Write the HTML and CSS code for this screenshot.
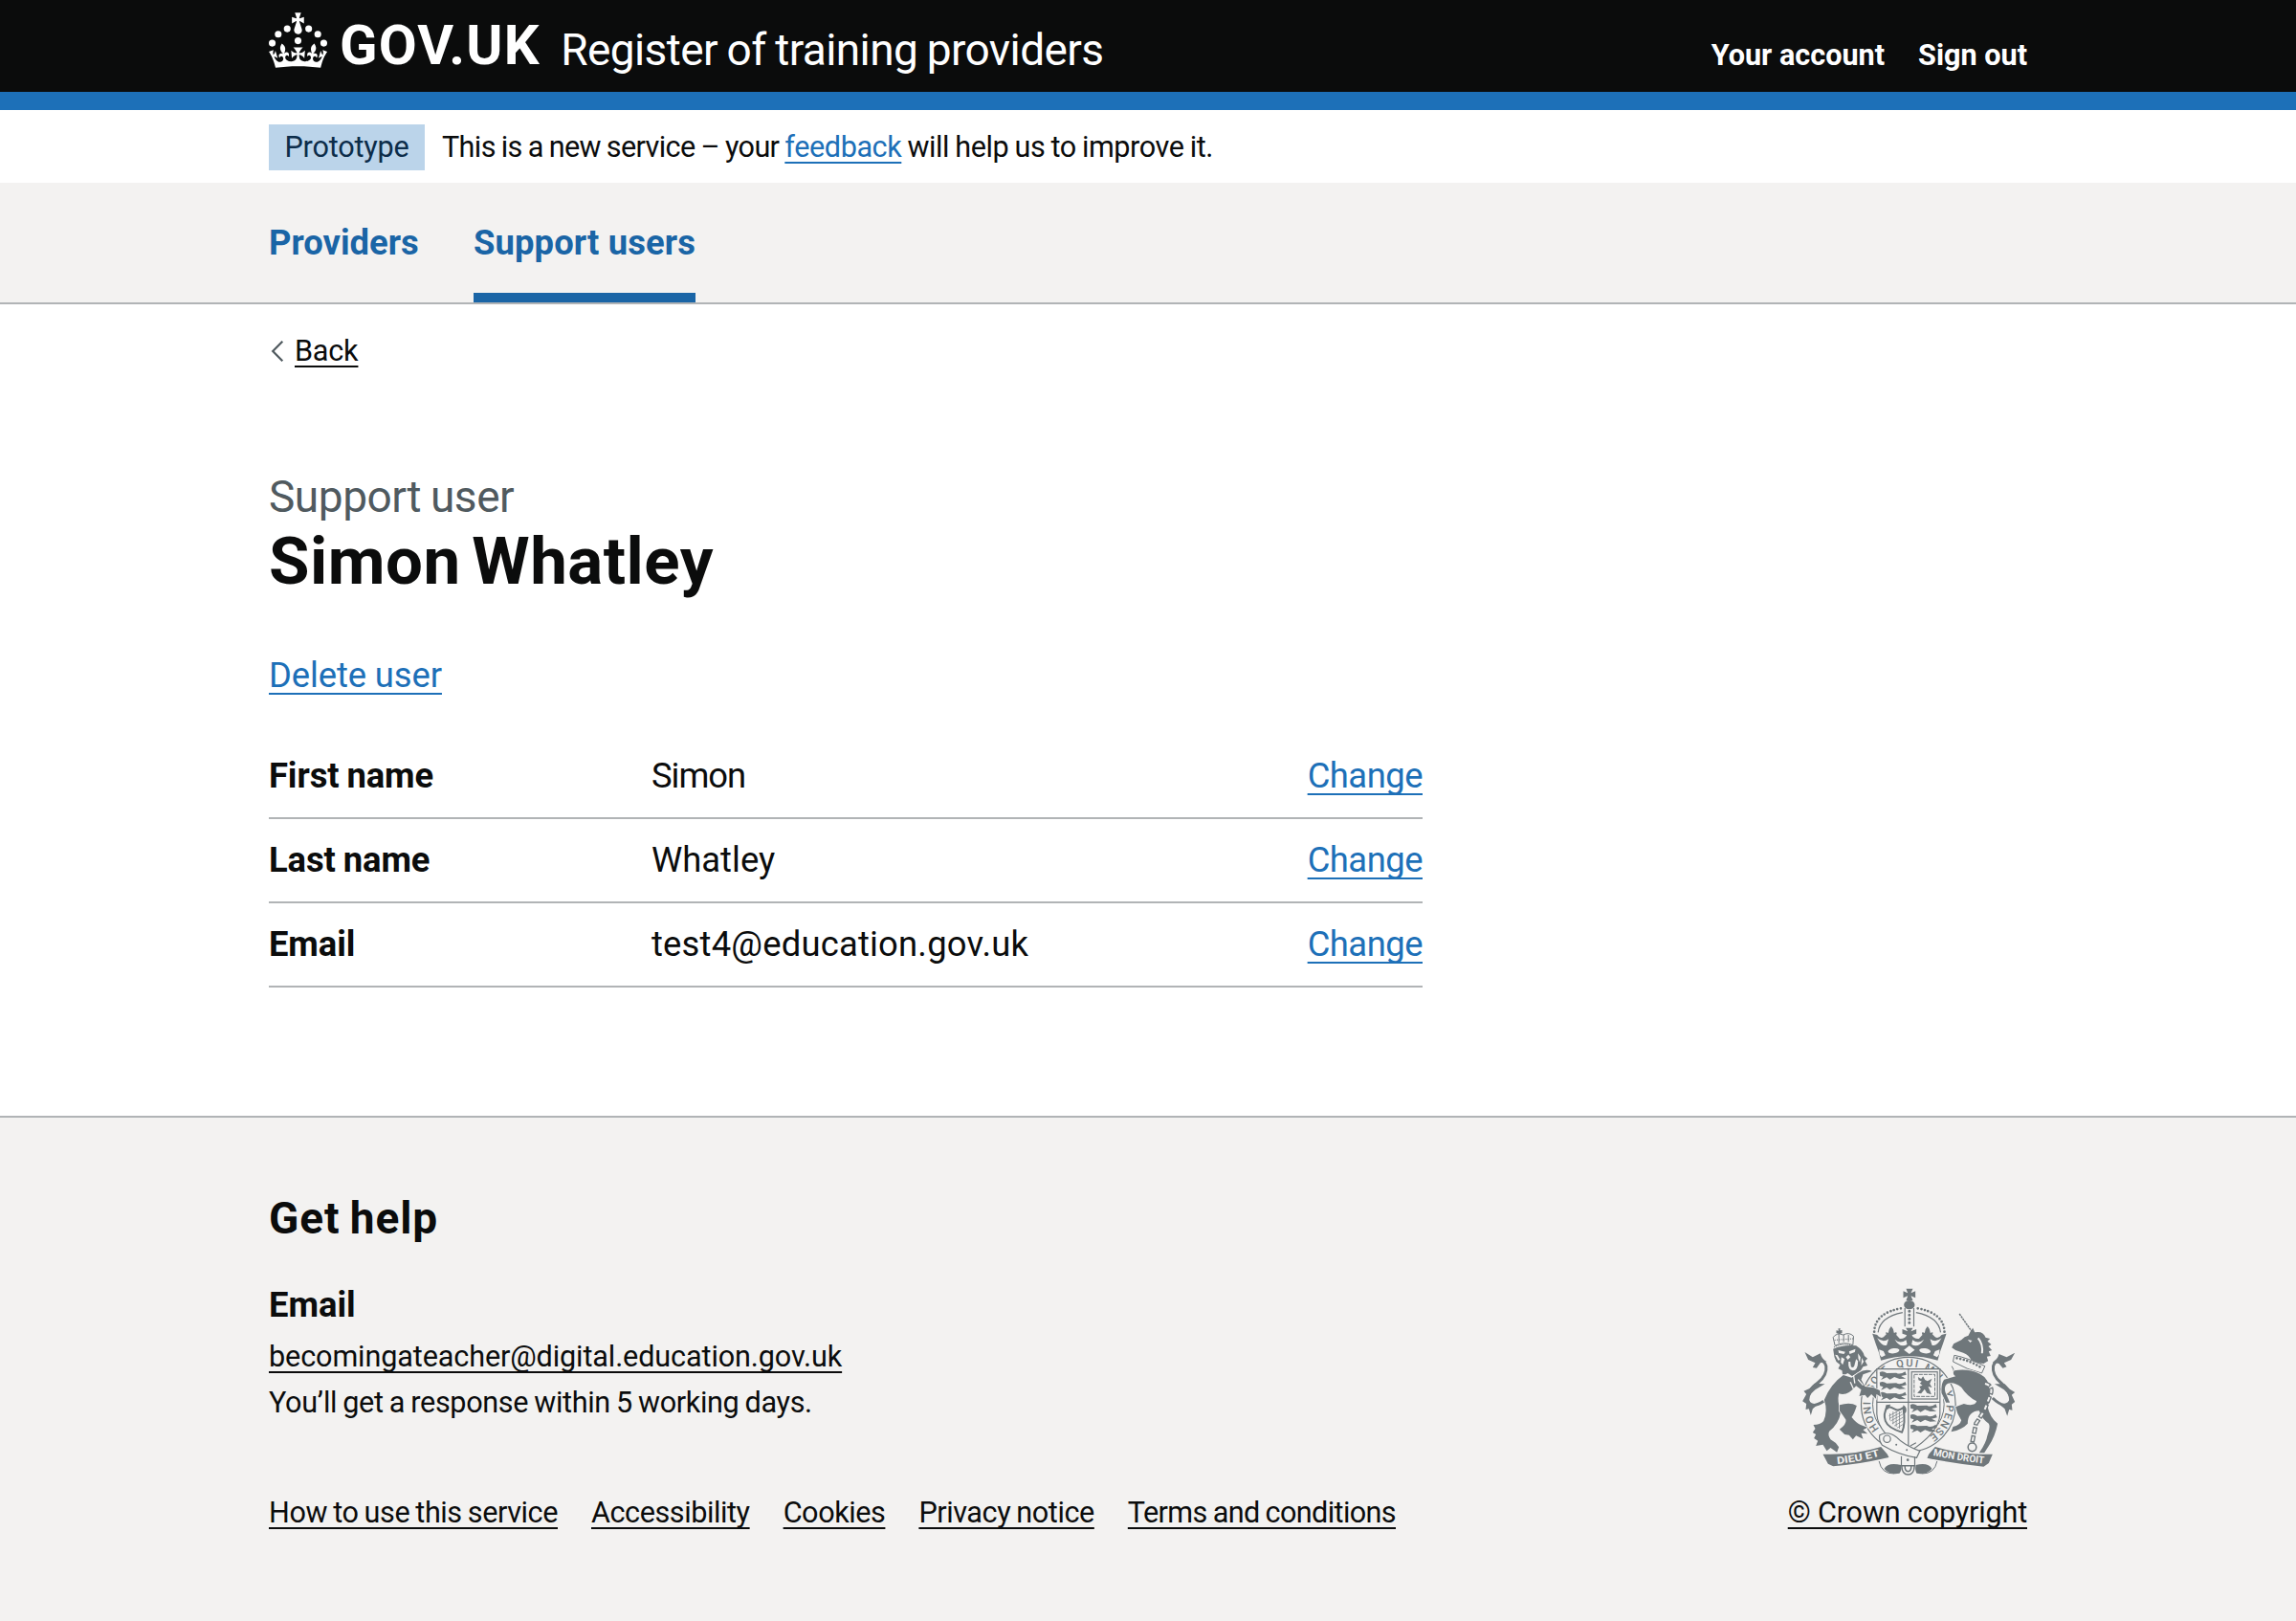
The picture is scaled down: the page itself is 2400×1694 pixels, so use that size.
FILE: index.html
```
<!DOCTYPE html>
<html lang="en">
<head>
<meta charset="utf-8">
<title>Simon Whatley - Register of training providers</title>
<link rel="stylesheet" href="styles.css">
</head>
<body>
<header class="header">
  <div class="container header-row">
    <svg class="crown" viewBox="0 0 63.4 60" aria-hidden="true">
      <circle cx="20" cy="17.6" r="3.7"/><circle cx="10.2" cy="23.5" r="3.7"/><circle cx="3.7" cy="33.2" r="3.7"/><circle cx="31.7" cy="30.6" r="3.7"/><circle cx="43.3" cy="17.6" r="3.7"/><circle cx="53.2" cy="23.5" r="3.7"/><circle cx="59.7" cy="33.2" r="3.7"/>
      <path d="M33.1,9.8c.2-.1.3-.3.5-.5l4.6,2.4v-6.8l-4.6,1.5c-.1-.2-.3-.3-.5-.5l1.9-5.9h-6.7l1.9,5.9c-.2.1-.3.3-.5.5l-4.6-1.5v6.8l4.6-2.4c.1.2.3.3.5.5l-2.6,8c-.9,2.8,1.2,5.7,4.1,5.7h0c3,0,5.1-2.9,4.1-5.7l-2.6-8ZM37,37.9s-3.4,3.8-4.1,6.1c2.2,0,4.2-.5,6.4-2.8l-.7,8.5c-2-2.8-4.4-4.1-5.7-3.8.1,3.1.5,6.7,5.8,7.2,3.7.3,6.7-1.5,7-3.8.4-2.6-2-4.3-3.7-1.6-1.4-4.5,2.4-6.1,4.9-3.2-1.9-4.5-1.8-7.7,2.4-10.9,3,4,2.6,7.3-1.2,11.1,2.4-1.3,6.2,0,4,4.6-1.2-2.8-3.7-2.2-4.2.2-.3,1.7.7,3.7,3,4.2,1.9.3,4.7-.9,7-5.9-1.3,0-2.4.7-3.9,1.7l2.4-8c.6,2.3,1.4,3.7,2.2,4.5.6-1.6.5-2.8,0-5.3l5,1.8c-2.6,3.6-5.2,8.7-7.3,17.5-7.4-1.1-15.7-1.7-24.5-1.7h0c-8.8,0-17.1.6-24.5,1.7-2.1-8.9-4.7-13.9-7.3-17.5l5-1.8c-.5,2.5-.6,3.7,0,5.3.8-.8,1.6-2.3,2.2-4.5l2.4,8c-1.5-1-2.6-1.7-3.9-1.7,2.3,5,5.2,6.2,7,5.9,2.3-.4,3.3-2.4,3-4.2-.5-2.4-3-3.1-4.2-.2-2.2-4.6,1.6-6,4-4.6-3.7-3.7-4.2-7.1-1.2-11.1,4.2,3.2,4.3,6.4,2.4,10.9,2.5-2.8,6.3-1.3,4.9,3.2-1.8-2.7-4.1-1-3.7,1.6.3,2.3,3.3,4.1,7,3.8,5.4-.5,5.7-4.2,5.8-7.2-1.3-.2-3.7,1-5.7,3.8l-.7-8.5c2.2,2.3,4.2,2.7,6.4,2.8-.7-2.3-4.1-6.1-4.1-6.1h10.6Z"/>
    </svg>
    <span class="logotype">GOV.UK</span>
    <span class="product">Register of training providers</span>
    <nav class="account">
      <a>Your account</a>
      <a>Sign out</a>
    </nav>
  </div>
</header>

<div class="container phase">
  <strong class="tag">Prototype</strong>
  <span class="phase-text"><span class="lead">This is a new service – your </span><a class="link">feedback</a> will help us to improve it.</span>
</div>

<nav class="primary">
  <div class="container primary-row">
    <a>Providers</a>
    <a class="current">Support users</a>
  </div>
</nav>

<main class="container main">
  <div class="back">
    <svg class="chevron" viewBox="0 0 14 24" aria-hidden="true"><path d="M12.3 1.7 L2.2 12 L12.3 22.3"/></svg>
    <a>Back</a>
  </div>
  <div class="caption">Support user</div>
  <h1>Simon Whatley</h1>
  <p class="delete"><a class="link">Delete user</a></p>
  <dl class="summary">
    <div class="row"><dt>First name</dt><dd class="first">Simon</dd><dd class="action"><a class="link">Change</a></dd></div>
    <div class="row"><dt>Last name</dt><dd class="last">Whatley</dd><dd class="action"><a class="link">Change</a></dd></div>
    <div class="row"><dt>Email</dt><dd class="mail">test4@education.gov.uk</dd><dd class="action"><a class="link">Change</a></dd></div>
  </dl>
</main>

<footer class="footer">
  <div class="container footer-row">
    <div class="footer-main">
      <h2>Get help</h2>
      <h3>Email</h3>
      <p class="address"><a>becomingateacher@digital.education.gov.uk</a></p>
      <p class="response">You’ll get a response within 5 working days.</p>
      <ul class="footer-links">
        <li><a>How to use this service</a></li>
        <li><a>Accessibility</a></li>
        <li><a>Cookies</a></li>
        <li><a>Privacy notice</a></li>
        <li class="terms"><a>Terms and conditions</a></li>
      </ul>
    </div>
    <div class="copyright">
      <svg class="crest" viewBox="72 45 668 588" aria-hidden="true">
        <defs>
          <path id="garter-path" d="M404 529A119 119 0 1 1 404.100 529"/>
          <path id="motto-left" d="M181 597Q250 590 320 570"/>
          <path id="motto-right" d="M481 570Q560 586 646 596"/>
        </defs>
        <!-- imperial crown -->
        <path d="M397 47H418L412 61L426 55V76L412 70L418 84H397L402 70L388 76V55L402 61Z"/>
        <ellipse cx="407" cy="98" rx="17" ry="14"/>
        <path class="line w4" d="M393 108V166M421 108V166"/>
        <path class="dots d8" d="M407 118V166"/>
        <path class="dots d7" d="M297 182Q299 122 386 108M517 182Q515 122 428 108"/>
        <path class="line w4" d="M309 184Q315 136 386 122M505 184Q499 136 428 122"/>
        <path d="M291 188L306 192Q316 206 326 199L335 190Q329 180 341 186Q341 174 350 165Q359 174 359 186Q371 180 366 192L377 204Q392 206 399 193L385 188V174L402 181L396 170H418L412 181L429 174V188L415 193Q422 206 437 204L448 192Q443 180 455 186Q455 174 464 165Q473 174 473 186Q485 180 479 190L488 199Q498 206 508 192L523 188Q512 222 503 246L496 272Q450 259 407 259Q364 259 318 272L311 246Q302 222 291 188Z"/>
        <g class="void">
          <path d="M407 226L424 239L407 252L390 239ZM312 238L326 243L332 256L320 262L314 254ZM502 238L488 243L482 256L494 262L500 254Z"/>
          <ellipse cx="358" cy="242" rx="18" ry="8" transform="rotate(-8 358 242)"/>
          <ellipse cx="456" cy="242" rx="18" ry="8" transform="rotate(8 456 242)"/>
          <path d="M306 202Q325 218 342 205L336 224Q322 230 306 202ZM361 206Q378 222 397 208L400 222Q378 234 361 206ZM417 208Q436 222 453 206Q436 234 414 222ZM508 202Q489 218 472 205L478 224Q492 230 508 202Z"/>
        </g>
        <!-- garter -->
        <circle class="sheet line w4" cx="404" cy="410" r="148"/>
        <circle class="line w3" cx="404" cy="410" r="112"/>
        <text class="garter"><textPath href="#garter-path" startOffset="104" textLength="90">HONI</textPath></text>
        <text class="garter"><textPath href="#garter-path" startOffset="226" textLength="84">SOIT</textPath></text>
        <text class="garter"><textPath href="#garter-path" startOffset="338" textLength="64">QUI</textPath></text>
        <text class="garter"><textPath href="#garter-path" startOffset="422" textLength="66">MAL</textPath></text>
        <text class="garter"><textPath href="#garter-path" startOffset="520">Y</textPath></text>
        <text class="garter"><textPath href="#garter-path" startOffset="561" textLength="116">PENSE</textPath></text>
        <!-- shield -->
        <path class="sheet line w4" d="M305 299H503V440Q500 500 404 560Q308 500 305 440Z"/>
        <path class="line w4" d="M404 299V556M305 403H503"/>
        <g id="guards">
          <path d="M314 309Q325 304 336 312L366 311Q378 318 394 307L398 317L381 321L396 329L376 330L360 324L346 332L336 325L318 333L325 323L315 320Z"/>
          <path d="M314 341Q325 336 336 344L366 343Q378 350 394 339L398 349L381 353L396 361L376 362L360 356L346 364L336 357L318 365L325 355L315 352Z"/>
          <path d="M314 373Q325 368 336 376L366 375Q378 382 394 371L398 381L381 385L396 393L376 394L360 388L346 396L336 389L318 397L325 387L315 384Z"/>
        </g>
        <use href="#guards" transform="translate(96 102)"/>
        <rect class="line w4" x="414" y="308" width="81" height="85"/>
        <rect class="line w3 dash" x="422" y="316" width="65" height="69"/>
        <path d="M434 324L444 330L450 322L456 333L464 337L478 329L471 345L478 357L466 354L472 368L476 379L462 374L455 362L444 376L432 374L443 362L438 354L448 350L440 344L446 338L436 334Z"/>
        <path class="line w6" d="M338 418Q324 440 332 462Q340 484 384 497Q396 470 388 420Q374 432 360 424Q346 416 338 418Z"/>
        <path d="M388 412Q402 420 396 436L388 440ZM334 412L348 410L342 424L330 428Z"/>
        <path class="line w2" d="M343 446L380 426M345 454L384 433M348 462L386 441M353 470L388 450M360 477L388 461M368 484L388 472M346 438V460M356 432V472M366 432V480M376 432V486"/>
        <!-- belt and buckle -->
        <path class="sheet line w4" d="M314 506Q340 492 366 512Q390 538 440 556L430 577Q376 570 322 538Q310 522 314 506Z"/>
        <circle class="line w4" cx="337" cy="518" r="11"/>
        <circle cx="366" cy="536" r="3"/><circle cx="399" cy="553" r="3"/><circle cx="402" cy="584" r="4"/>
        <path class="line w4" d="M410 540L428 530M382 572V604M424 574V604"/>
        <path class="line w5" d="M383 602Q384 630 403 630Q422 630 423 602ZM393 604Q393 620 403 620Q413 620 413 604"/>
        <path d="M328 612Q340 590 381 600Q384 618 376 626Q345 632 328 612ZM478 612Q466 590 427 600Q424 618 430 626Q461 632 478 612Z"/>
        <path class="line w3" d="M312 588Q320 628 360 627M494 588Q486 628 446 627"/>
        <!-- ribbons -->
        <path d="M136 566Q230 570 318 543L338 566L343 576Q250 598 168 604L152 596Z"/>
        <path d="M668 566Q580 570 488 543L468 566L463 578Q550 596 640 605L656 594Z"/>
        <text class="motto"><textPath href="#motto-left" textLength="136" lengthAdjust="spacingAndGlyphs">DIEU ET</textPath></text>
        <text class="motto"><textPath href="#motto-right" textLength="162" lengthAdjust="spacingAndGlyphs">MON DROIT</textPath></text>
        <!-- lion -->
        <path class="line w3" d="M174 226L168 200Q178 184 200 192Q218 182 232 196L230 224Q202 212 174 226ZM186 192V218M216 192V214M201 192V214"/>
        <path d="M184 172H191L189 178L196 177V186L188 190L178 186V178L185 179Z"/>
        <path class="dots d4" d="M174 208L230 204M172 230Q200 216 232 226"/>
        <path d="M168 236Q200 222 240 226Q262 240 266 258L276 266L268 274L276 288L262 292Q256 306 244 312L228 322L214 312L198 320L196 304L184 298L190 286L178 276L172 262Z"/>
        <g class="void">
          <path d="M184 240L206 245L202 252L186 249ZM218 244L238 236L236 246L220 252ZM216 276H222L224 292Q234 298 236 282L240 268L246 274Q246 304 230 304Q214 302 216 276ZM208 262L216 254L222 262L214 270ZM194 262L204 268L198 286L192 278ZM246 250L254 262L252 278L247 266ZM174 254L182 256L190 270L184 272ZM258 264L264 276L256 288Z"/>
        </g>
        <path class="beast" d="M200 318Q160 346 140 396Q152 430 138 462Q128 474 106 474L112 486L104 498L114 504L108 516L120 524L114 540L136 536L148 556L160 546L180 560L186 544Q176 528 160 520Q150 504 156 494Q186 470 192 434Q180 402 186 376Q212 386 240 352L256 364L250 384L268 380L276 390L288 378L302 392L304 378L318 386L314 366L296 358L268 354L256 332L262 316L290 306Q270 296 246 312L226 326Z"/>
        <path class="beast" d="M188 412Q222 402 242 414Q234 440 226 450Q240 468 254 474L276 482L262 490L276 502L256 500L262 518L240 508L230 520L218 506L204 504L188 488Q210 472 208 458Q200 446 188 430Z"/>
        <path class="line w8" d="M138 400Q98 428 86 392Q88 366 120 342Q150 318 146 290Q140 268 118 272"/>
        <path d="M79 246L104 262L128 250Q132 268 148 276L128 280L116 296L104 294L112 280L90 270ZM142 346L110 344L94 360L76 368L84 378L72 400L84 408L82 426L92 424L98 444L104 424L120 410L96 408Q86 384 112 364Z"/>
        <path class="cut" d="M232 318L236 344M222 340L232 362M246 332L262 350"/>
        <!-- unicorn -->
        <path class="line w5 horn" d="M564 126L606 186"/>
        <path d="M598 182L606 170L612 184Q638 178 646 200L660 204L652 212L664 222L655 228L666 240L656 244L662 258L650 260L654 274L640 282L604 278Q596 254 576 248L552 240L540 232L546 220L570 208Q580 196 592 194Z"/>
        <path class="void" d="M590 207L604 210L598 216ZM625 200Q642 220 638 250L632 250Q636 222 620 204Z"/>
        <path class="sheet line w3" d="M548 256Q590 264 644 290L634 312Q590 302 544 276ZM540 290Q548 302 546 308"/>
        <path class="dots d7" d="M556 265Q600 273 634 296"/>
        <path class="beast" d="M548 304Q590 296 628 314Q660 330 658 372Q664 396 652 416Q660 452 684 470Q676 510 656 540L642 562H626Q648 530 652 506Q662 480 656 470Q634 456 626 430Q590 432 590 470Q574 488 538 496L544 480Q566 476 570 460Q556 440 552 418L578 408Q612 418 618 400Q588 384 570 356Q548 338 528 344Q514 352 520 372L534 404H522L508 374Q506 344 516 332L552 322Q540 314 548 304Z"/>
        <path class="line w8" d="M668 390Q710 430 726 396Q722 366 694 342Q666 318 670 290Q676 268 700 270"/>
        <path d="M738 248L712 262L688 252Q684 268 668 278L688 282L700 296L712 292L704 280L726 270ZM674 346L706 346L722 362L738 372L728 380L738 402L728 410L730 428L720 426L714 446L706 424L692 412L716 408Q728 384 704 364Z"/>
        <path class="chain" d="M640 344Q674 350 660 382L642 430L616 470L604 530"/>
        <path class="links" d="M640 344Q674 350 660 382L642 430L616 470L604 530"/>
        <circle class="line w5" cx="604" cy="544" r="13"/>
      </svg>
      <a>© Crown copyright</a>
    </div>
  </div>
</footer>
</body>
</html>
```
FILE: styles.css
```
* { box-sizing: border-box; }

body {
  margin: 0;
  background: #fff;
  color: #0b0c0c;
  font-family: Roboto, "Liberation Sans", sans-serif;
  font-size: 30.6px;
  line-height: 48px;
}

h1, h2, h3, p, dl, dd, ul { margin: 0; padding: 0; }
ul { list-style: none; }

.container { width: 1838px; margin: 0 auto; }

.link, .back a, .footer a {
  text-decoration: underline;
  text-decoration-thickness: 2px;
  text-underline-offset: 5px;
  text-decoration-skip-ink: none;
}
.link { color: #1d70b8; }

/* Header */
.header {
  height: 115px;
  background: #0b0c0c;
  border-bottom: 19px solid #1d70b8;
  color: #fff;
}
.header-row { display: flex; align-items: flex-start; height: 96px; white-space: nowrap; }
.crown { width: 61px; height: 58px; margin-top: 13px; fill: #fff; flex: none; }
.logotype {
  margin-left: 13px;
  font-size: 58px;
  font-weight: 700;
  line-height: 95px;
  letter-spacing: 1.2px;
}
.product {
  margin-left: 21.5px;
  padding-top: 4px;
  font-size: 46px;
  line-height: 96px;
  letter-spacing: -.6px;
  word-spacing: -1.2px;
}
.account {
  display: flex;
  gap: 35px;
  margin-left: auto;
  padding-top: 10px;
  font-weight: 700;
  line-height: 96px;
}

/* Phase banner */
.phase { display: flex; height: 76px; padding-top: 15px; white-space: nowrap; }
.tag {
  width: 163px;
  height: 48px;
  background: #bbd4ea;
  color: #0c2d4a;
  font-weight: 400;
  line-height: 47px;
  letter-spacing: -.2px;
  text-align: center;
}
.phase-text { margin-left: 18px; line-height: 47px; letter-spacing: -.42px; word-spacing: -1px; }
.lead { letter-spacing: -.63px; }

/* Primary navigation */
.primary { background: #f3f2f1; border-bottom: 2px solid #b1b4b6; }
.primary-row {
  display: flex;
  gap: 57.300px;
  color: #1a65a6;
  font-size: 36.4px;
  font-weight: 700;
  line-height: 126px;
  height: 125px;
}
.current { height: 125px; letter-spacing: .1px; box-shadow: inset 0 -10px #1a65a6; }

/* Page content */
.main { height: 848px; padding-top: 25px; font-size: 36.4px; }
.back { display: flex; align-items: center; height: 48px; font-size: 30.6px; }
.back a { letter-spacing: -.2px; }
.chevron { width: 14px; height: 24px; margin: 0 11px 0 2px; fill: none; stroke: #505a5f; stroke-width: 2.2; }
.caption {
  margin-top: 99px;
  color: #505a5f;
  font-size: 46px;
  line-height: 58px;
  letter-spacing: -.45px;
  word-spacing: -1.2px;
}
h1 { margin-top: 2px; font-size: 69px; line-height: 74px; letter-spacing: .5px; word-spacing: -6px; }
.delete { margin-top: 58px; letter-spacing: -.1px; }
.delete .link, .action .link { text-underline-offset: 6px; }
.summary { width: 1206px; margin-top: 38px; }
.row {
  display: grid;
  grid-template-columns: 400px 1fr auto;
  height: 88px;
  padding-top: 19px;
  border-bottom: 2px solid #b1b4b6;
}
dt { font-weight: 700; letter-spacing: -.1px; word-spacing: -1px; }
.first { letter-spacing: -1px; }
.last { letter-spacing: 0; }
.mail { letter-spacing: .2px; }
.action { letter-spacing: -.5px; }

/* Footer */
.footer { height: 528px; background: #f3f2f1; border-top: 2px solid #b1b4b6; }
.footer-row { display: flex; justify-content: space-between; padding-top: 76px; }
h2 { font-size: 46px; line-height: 58px; letter-spacing: .9px; word-spacing: -2px; }
h3 { margin-top: 38px; font-size: 36.4px; }
.address { margin-top: 6px; letter-spacing: -.12px; }
.response { letter-spacing: -.36px; word-spacing: -1px; }
.footer-links {
  display: flex;
  gap: 35px;
  margin-top: 67px;
  letter-spacing: -.43px;
  word-spacing: -1px;
  white-space: nowrap;
}
.terms { letter-spacing: -.62px; }
.copyright {
  display: flex;
  flex-direction: column;
  align-items: flex-end;
  padding-top: 102px;
  letter-spacing: -.18px;
}
.crest { width: 223px; height: 196px; margin: 0 12px 15px 0; fill: #6f777b; }
.crest .line { stroke: #6f777b; fill: none; }
.crest .sheet, .crest .void { fill: #f3f2f1; }
.crest .beast { stroke: #f3f2f1; stroke-width: 5; paint-order: stroke; }
.crest .w2 { stroke-width: 2; }
.crest .w3 { stroke-width: 3; }
.crest .w4 { stroke-width: 3.5; }
.crest .w5 { stroke-width: 4.5; }
.crest .w6 { stroke-width: 6; }
.crest .w8 { stroke-width: 9; }
.crest .dash { stroke-dasharray: 12 3; }
.crest .horn { stroke-dasharray: 7 2; }
.crest .cut { fill: none; stroke: #f3f2f1; stroke-width: 4; }
.crest .dots { fill: none; stroke: #6f777b; stroke-linecap: round; }
.crest .d4 { stroke-width: 4; stroke-dasharray: 0 7; }
.crest .d7 { stroke-width: 8; stroke-dasharray: 0 11; }
.crest .d8 { stroke-width: 9; stroke-dasharray: 0 12; }
.crest .chain { fill: none; stroke: #6f777b; stroke-width: 14; stroke-dasharray: 22 5; }
.crest .links { fill: none; stroke: #f3f2f1; stroke-width: 6; stroke-dasharray: 14 13; stroke-dashoffset: -4; }
.garter { font-size: 33px; font-weight: 500; letter-spacing: 0; }
.motto { font-size: 31px; font-weight: 700; fill: #f3f2f1; letter-spacing: 0; }
```
